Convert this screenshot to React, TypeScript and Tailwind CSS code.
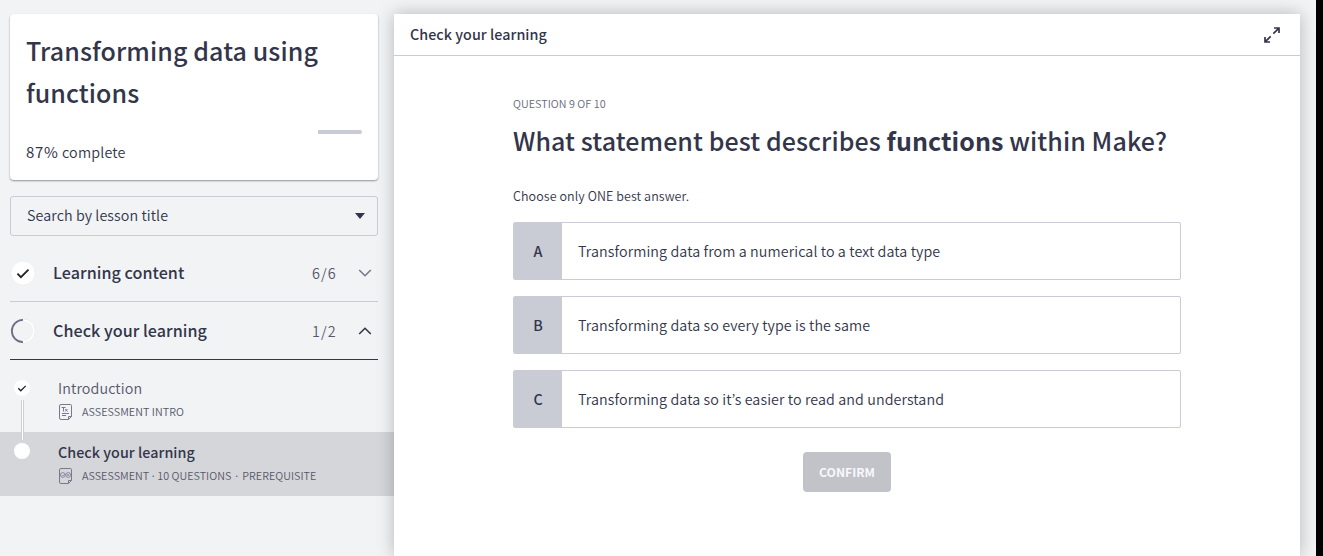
import type { ReactNode } from "react";

const options = [
  { key: "A", text: "Transforming data from a numerical to a text data type" },
  { key: "B", text: "Transforming data so every type is the same" },
  { key: "C", text: "Transforming data so it’s easier to read and understand" },
];

function Section({ icon, title, count, open }: { icon: ReactNode; title: string; count: string; open?: boolean }) {
  return (
    <button
      className={`flex h-[58px] w-full items-center border-b text-left ${open ? "border-[#34344a]" : "border-[#c9cbd6]"}`}
    >
      <span className="flex w-[43px] shrink-0">{icon}</span>
      <span className="flex-1 pb-0.5 text-[16.1px] leading-6 font-medium tracking-[0.05px] text-[#33354a]">{title}</span>
      <span className="w-[46px] text-[14.4px] leading-6 tracking-[1.1px] text-[#55576b]">{count}</span>
      <svg width="14" height="8" viewBox="0 0 14 8" fill="none" className="mr-1.5" stroke={open ? "#34344a" : "#77798b"} strokeWidth="1.6">
        <path d={open ? "M1.2 7 7 1.3 12.8 7" : "M1.2 1 7 6.7 12.8 1"} />
      </svg>
    </button>
  );
}

function PageIcon({ children }: { children: ReactNode }) {
  return (
    <svg width="14" height="16" viewBox="0 0 14 16" fill="none" stroke="#77798f" strokeWidth="1" className="mr-[9px] ml-px shrink-0">
      <path d="M9.500 15.500H2A1.500 1.500 0 0 1 .5 14V2A1.500 1.500 0 0 1 2 .5h9.500A1 1 0 0 1 12.500 1.500V12.500L9.500 15.500V12.500h3" />
      {children}
    </svg>
  );
}

export default function App() {
  return (
    <div className="flex h-[556px] w-[1323px] overflow-hidden bg-black font-['Noto_Sans_CJK_KR',sans-serif] font-[350] text-[#33354a]">
      <div className="flex w-[1316px] bg-[#f1f3f5] pt-3.5">
        <aside className="w-[394px] shrink-0">
          <div className="pr-4 pl-2.5">
            <div className="h-[166px] rounded bg-white px-4 pt-[15px] shadow-[0_1px_2px_rgba(0,0,0,0.4)]">
              <h1 className="text-[25px] leading-[42px] font-medium tracking-[0.1px]">Transforming data using functions</h1>
              <div className="mt-[17px] flex h-1 justify-end">
                <div className="h-1 w-11 rounded-r-sm bg-[#c9cbd6]" />
              </div>
              <p className="mt-1.5 text-[14.3px] leading-6 tracking-[0.2px]">
                <span className="text-[15px] leading-none font-normal tracking-[0.7px]">87%</span> complete
              </p>
            </div>
            <div className="mt-4 flex h-10 items-center justify-between rounded-[3px] border border-[#c9cbd6] pr-3 pl-4 text-[14.3px] tracking-[0.08px]">
              <span className="pb-0.5">Search by lesson title</span>
              <svg width="10" height="6" viewBox="0 0 10 6" fill="#34344a"><path d="M0 0h10L5 6z" /></svg>
            </div>
            <div className="pt-2">
              <Section
                title="Learning content"
                count="6/6"
                icon={
                  <svg width="26" height="26" viewBox="0 0 26 26" fill="none">
                    <circle cx="13" cy="13" r="12" fill="#fff" stroke="#e4e6ea" strokeWidth=".5" />
                    <path d="m7.400 13.700 3.500 3.500 7.600-7.600" stroke="#222" strokeWidth="1.800" />
                  </svg>
                }
              />
              <Section
                open
                title="Check your learning"
                count="1/2"
                icon={
                  <svg width="26" height="26" viewBox="0 0 26 26" fill="none">
                    <circle cx="13" cy="13" r="11.900" stroke="#d5d7dc" strokeWidth=".7" />
                    <path d="M13 1.900a11.100 11.100 0 0 1 0 22.200" stroke="#fff" strokeWidth="1.500" />
                    <path d="M13 1.900a11.100 11.100 0 0 0 0 22.200" stroke="#6d6f84" strokeWidth="1.800" />
                  </svg>
                }
              />
            </div>
          </div>
          <ul className="pt-2">
            <li className="relative flex h-16 pt-2 pl-3.5">
              <svg width="16" height="16" viewBox="0 0 16 16" fill="none" className="mt-1 mr-7">
                <circle cx="8" cy="8" r="8" fill="#fff" />
                <path d="m4.300 8.300 2.500 2.500 4.900-4.900" stroke="#222" strokeWidth="1.300" />
              </svg>
              <span className="absolute top-8 left-[21px] z-10 h-10 w-[3px] border-x border-[#cfd0d5] bg-white" />
              <div>
                <div className="text-[14.3px] leading-6 tracking-[0.12px] text-[#55576b]">Introduction</div>
                <div className="flex h-6 items-center text-[10.750px] tracking-[0.05px] text-[#55576b]">
                  <PageIcon>
                    <path d="M2.500 3.500h4M4.500 3.500V7.500M6.200 5l2.300 2.500M8.500 5 6.200 7.500M3 9.500h7M3 11.500h4" />
                  </PageIcon>
                  ASSESSMENT INTRO
                </div>
              </div>
            </li>
            <li className="flex h-16 bg-[#d5d6da] pt-2 pl-3.5">
              <span className="mt-[3px] mr-7 size-4 rounded-full bg-white" />
              <div>
                <div className="text-[14.3px] leading-6 font-medium tracking-[0.05px]">Check your learning</div>
                <div className="flex h-6 items-center text-[10.750px] tracking-[0.03px] text-[#55576b]">
                  <PageIcon>
                    <circle cx="3.800" cy="7" r="2.400" strokeWidth=".8" />
                    <circle cx="9.200" cy="7" r="2.400" strokeWidth=".8" />
                    <path d="m2.800 7 1 1 2-2M8.300 6.100l1.800 1.800M10.100 6.100 8.300 7.900" strokeWidth=".7" />
                  </PageIcon>
                  <span>ASSESSMENT<span className="-mx-[1.400px]"> · </span>10 QUESTIONS</span>
                  <span className="px-[2.500px]">·</span>
                  <span>PREREQUISITE</span>
                </div>
              </div>
            </li>
          </ul>
        </aside>

        <main className="flex w-[906px] shrink-0 flex-col bg-white shadow-[0_0_16px_rgba(0,0,0,0.25)]">
          <header className="flex h-[42px] items-center justify-between border-b border-[#c9cbd6] pr-5 pl-4">
            <h2 className="pb-0.5 text-[14.3px] leading-6 font-medium tracking-[0.05px]">Check your learning</h2>
            <svg width="16" height="16" viewBox="0 0 16 16" fill="none" stroke="#34344a" strokeWidth="1.700">
              <path d="M10 1h5v5M14.700 1.300 9.300 6.700M1 10v5h5M1.300 14.700l5.400-5.400" />
            </svg>
          </header>
          <div className="flex flex-col px-[119px] pt-[39px]">
            <p className="text-[10.750px] leading-[18px] tracking-[0.05px] text-[#66687b]">QUESTION 9 OF 10</p>
            <h3 className="mt-1.5 text-[25px] leading-[42px] font-medium tracking-[0.08px] whitespace-nowrap">
              What statement best describes <b className="font-bold">functions</b> within Make?
            </h3>
            <p className="mt-6 text-[12.500px] leading-[21px] tracking-[0.08px]">Choose only ONE best answer.</p>
            <div className="mt-4 flex flex-col gap-4">
              {options.map((o) => (
                <button key={o.key} className="flex h-[58px] items-stretch overflow-hidden rounded-[2px] border border-[#c9cbd6] text-left">
                  <span className="flex w-12 items-center justify-center bg-[#c9cbd5] text-[14.3px] font-medium">{o.key}</span>
                  <span className="flex items-center pl-4 text-[14.3px] tracking-[0.09px]">{o.text}</span>
                </button>
              ))}
            </div>
            <button className="mt-6 h-10 w-[88px] self-center rounded bg-[#c2c3c9] text-[12.200px] font-bold text-[#f7f7f9]">CONFIRM</button>
          </div>
        </main>
      </div>
    </div>
  );
}
